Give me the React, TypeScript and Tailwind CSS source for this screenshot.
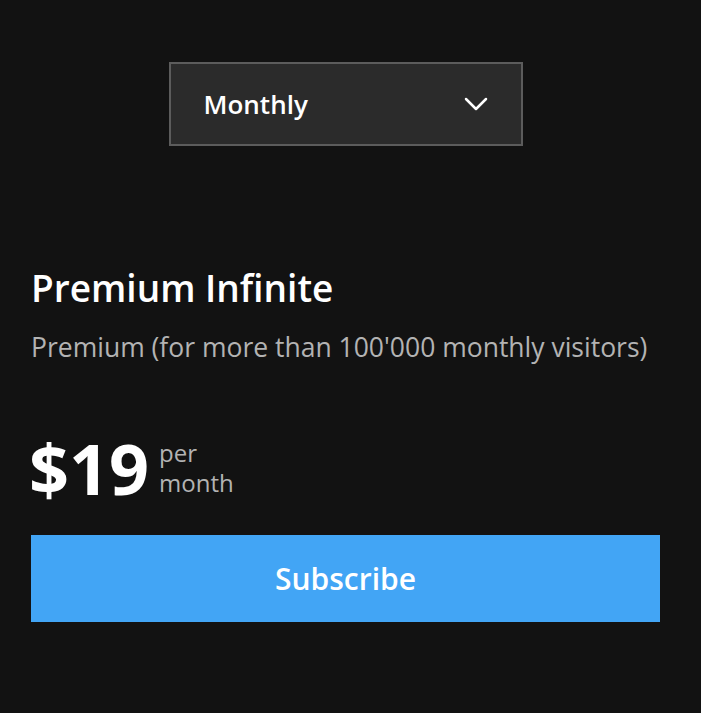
import React from 'react';

const font = { fontFamily: '"Open Sans", "Noto Sans", sans-serif' };

const Chevron = () => (
  <svg width="24" height="14" viewBox="0 0 24 14" fill="none" stroke="currentColor" strokeWidth={2.5} strokeLinecap="round" strokeLinejoin="round">
    <path d="M2 2l10 10L22 2" />
  </svg>
);

export default function App() {
  return (
    <div className="min-h-[713px] w-full bg-[#121212] text-white" style={font}>
      <div className="w-[691px] pl-[31px] pr-[31px] pt-[62px]">
        <div className="flex justify-center">
          <div className="flex h-[84px] w-[354px] items-center justify-between border-2 border-[#5c5c5c] bg-[#2b2b2b] pl-[33px] pr-[33px]">
            <span className="text-[26px] font-semibold">Monthly</span>
            <span className="text-white">
              <Chevron />
            </span>
          </div>
        </div>

        <h2 className="mt-[120px] text-[37px] font-semibold leading-[44px]">Premium Infinite</h2>
        <p className="mt-[20px] text-[26.5px] leading-[34px] text-[#b3b3b3]">
          Premium (for more than 100'000 monthly visitors)
        </p>

        <div className="mt-[64px] flex items-center">
          <span className="ml-[-2px] text-[70px] font-bold leading-[80px]">$19</span>
          <div className="ml-[10px] flex flex-col text-[24px] leading-[30px] text-[#b3b3b3]">
            <span>per</span>
            <span>month</span>
          </div>
        </div>

        <button className="mt-[27px] flex h-[87px] w-full items-center justify-center bg-[#42a5f5] text-[30px] font-semibold text-white">
          Subscribe
        </button>
      </div>
    </div>
  );
}
